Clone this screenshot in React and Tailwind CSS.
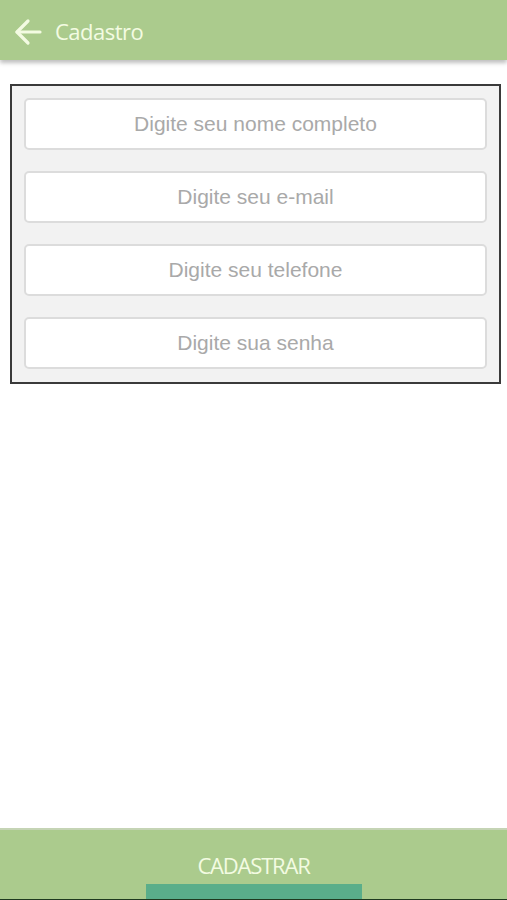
import React from 'react';

export default function App() {
  const fields = [
    'Digite seu nome completo',
    'Digite seu e-mail',
    'Digite seu telefone',
    'Digite sua senha',
  ];

  return (
    <div className="w-[507px] h-[900px] bg-white flex flex-col font-['Liberation_Sans',Arial,sans-serif]">
      {/* Header */}
      <header className="h-[60px] shrink-0 bg-[#abcb8d] flex items-center px-[13px] gap-[12px] pt-[3px] shadow-[0_3px_4px_rgba(0,0,0,0.25)] relative z-10">
        <svg width="30" height="30" viewBox="0 0 30 30" fill="none" stroke="#f3fbe2" strokeWidth="3.2" strokeLinecap="round" strokeLinejoin="round">
          <path d="M27 15H4" />
          <path d="M15 4L4 15l11 11" />
        </svg>
        <span className="text-[#f3fbe2] text-[22px] font-['Open_Sans',sans-serif] tracking-[-0.5px]">Cadastro</span>
      </header>

      {/* Form */}
      <main className="flex-1 pt-[24px] pl-[10px]">
        <div className="w-[491px] border-2 border-[#3a3a3a] bg-[#f2f2f2] px-[12px] pt-[12px] pb-[13px] flex flex-col gap-[21px]">
          {fields.map((f) => (
            <input
              key={f}
              placeholder={f}
              className="h-[52px] w-full bg-white border-2 border-[#dcdcdc] rounded-[5px] text-center text-[21px] placeholder:text-[#a9a9a9] outline-none"
            />
          ))}
        </div>
      </main>

      {/* Footer */}
      <footer className="h-[72px] shrink-0 bg-[#abcb8d] border-t-2 border-[#c5d4b5] flex flex-col items-center">
        <div className="flex-1 flex items-center pt-[16px]">
          <span className="text-[#f3fbe2] text-[22px] tracking-[-1.2px] font-['Open_Sans',sans-serif]">CADASTRAR</span>
        </div>
        <div className="w-[216px] h-[15px] bg-[#5aae8a]" />
        <div className="w-full h-[1px] bg-[#1f3a1f]" />
      </footer>
    </div>
  );
}
